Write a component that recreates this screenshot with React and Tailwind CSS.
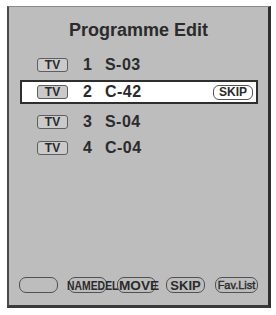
const rows = [
  { num: '1', name: 'S-03', mt: 'mt-[12px]' },
  { num: '2', name: 'C-42', mt: 'mt-[3px]', active: true },
  { num: '3', name: 'S-04', mt: 'mt-[6px]' },
  { num: '4', name: 'C-04', mt: 'mt-[2px]' },
];

function TvBadge() {
  return (
    <div className="w-[31px] h-[14px] rounded-[3px] border-[1.5px] border-[#5e5e5e] bg-[#cacaca] flex items-start justify-center pt-[1px]">
      <span className="text-[12px] leading-[11px] font-bold text-[#2a2a2a]">TV</span>
    </div>
  );
}

function Pill({ w = 'w-[39px]', children, justify = 'justify-center' }) {
  return (
    <div className={`${w} h-[16px] shrink-0 rounded-[7px] border-[1.5px] border-[#505050] flex items-center ${justify} overflow-visible`}>
      {children}
    </div>
  );
}

export default function App() {
  return (
    <div className="w-[276px] h-[315px] bg-white pt-[6px] pl-[7px]" style={{ fontFamily: '"Liberation Sans", Arial, sans-serif' }}>
      <div className="w-[264px] h-[302px] bg-[#bdbdbd] border-t border-t-[#8a8a8a] border-l-2 border-l-[#4a4a4a] border-r-[3px] border-r-[#2e2e2e] border-b-[3px] border-b-[#3a3a3a] flex flex-col">
        <div className="pt-[13px] text-center text-[18px] leading-[21px] font-bold text-[#2b2b2b]">Programme Edit</div>

        {rows.map((r) => (
          <div
            key={r.num}
            className={`${r.mt} ml-[11px] w-[238px] h-[24px] flex items-center pl-[15px] pr-[3px] ${r.active ? 'bg-white border-2 border-[#2e2e2e]' : 'border-2 border-transparent'}`}
          >
            <TvBadge />
            <span className="ml-[15px] text-[16px] font-bold text-[#2b2b2b] leading-none">{r.num}</span>
            <span className="ml-[13px] text-[16px] font-bold tracking-[0.5px] text-[#2b2b2b] leading-none">{r.name}</span>
            {r.active && (
              <div className="ml-auto w-[40px] h-[15px] rounded-[6px] border-[1.5px] border-[#555] flex items-center justify-center">
                <span className="text-[12px] font-bold leading-none text-[#2b2b2b]">SKIP</span>
              </div>
            )}
          </div>
        ))}

        <div className="flex-1" />

        <div className="flex items-center gap-[10px] pl-[10px] pb-[12px] text-[#2b2b2b] font-bold">
          <Pill />
          <Pill justify="justify-start">
            <span className="whitespace-nowrap text-[13px] leading-none -ml-[2px] scale-x-[0.8] origin-left">NAMEDEL</span>
          </Pill>
          <Pill justify="justify-start">
            <span className="whitespace-nowrap text-[13px] leading-none ml-[1px] scale-x-[1.05] origin-left">MOVE</span>
          </Pill>
          <Pill>
            <span className="text-[13px] leading-none">SKIP</span>
          </Pill>
          <Pill w="w-[43px]">
            <span className="whitespace-nowrap text-[11px] leading-none font-normal [-webkit-text-stroke:0.4px_#2b2b2b]">Fav.List</span>
          </Pill>
        </div>
      </div>
    </div>
  );
}
